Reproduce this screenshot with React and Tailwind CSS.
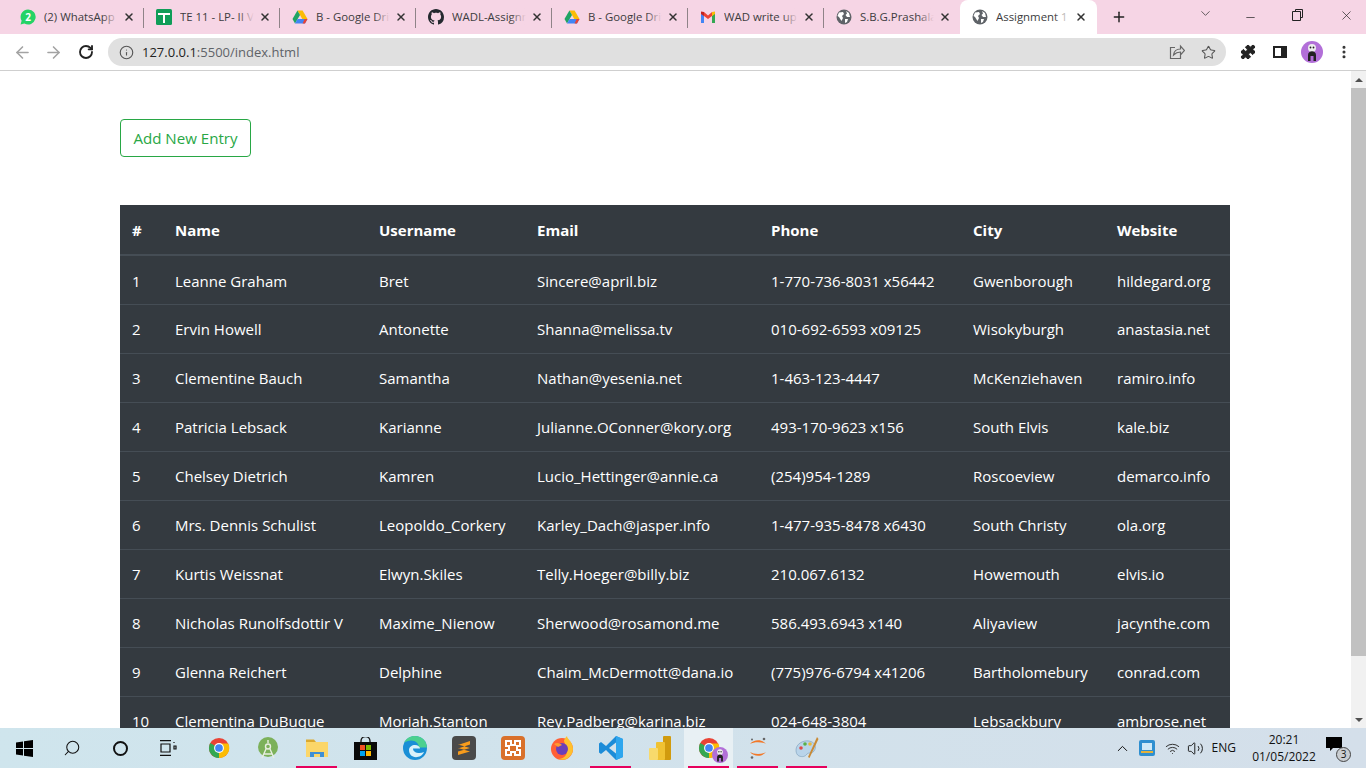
import React from "react";
import { Plus, X, Minus, ChevronDown, ArrowLeft, ArrowRight, RotateCw, Info, Star, Puzzle, MoreVertical, Search, ChevronUp, Wifi, Volume2 } from "lucide-react";

const users = [
  ["1", "Leanne Graham", "Bret", "Sincere@april.biz", "1-770-736-8031 x56442", "Gwenborough", "hildegard.org"],
  ["2", "Ervin Howell", "Antonette", "Shanna@melissa.tv", "010-692-6593 x09125", "Wisokyburgh", "anastasia.net"],
  ["3", "Clementine Bauch", "Samantha", "Nathan@yesenia.net", "1-463-123-4447", "McKenziehaven", "ramiro.info"],
  ["4", "Patricia Lebsack", "Karianne", "Julianne.OConner@kory.org", "493-170-9623 x156", "South Elvis", "kale.biz"],
  ["5", "Chelsey Dietrich", "Kamren", "Lucio_Hettinger@annie.ca", "(254)954-1289", "Roscoeview", "demarco.info"],
  ["6", "Mrs. Dennis Schulist", "Leopoldo_Corkery", "Karley_Dach@jasper.info", "1-477-935-8478 x6430", "South Christy", "ola.org"],
  ["7", "Kurtis Weissnat", "Elwyn.Skiles", "Telly.Hoeger@billy.biz", "210.067.6132", "Howemouth", "elvis.io"],
  ["8", "Nicholas Runolfsdottir V", "Maxime_Nienow", "Sherwood@rosamond.me", "586.493.6943 x140", "Aliyaview", "jacynthe.com"],
  ["9", "Glenna Reichert", "Delphine", "Chaim_McDermott@dana.io", "(775)976-6794 x41206", "Bartholomebury", "conrad.com"],
  ["10", "Clementina DuBuque", "Moriah.Stanton", "Rey.Padberg@karina.biz", "024-648-3804", "Lebsackbury", "ambrose.net"],
];

const ChromeIcon = ({ size = 22 }) => (
  <svg width={size} height={size} viewBox="0 0 24 24">
    <circle cx="12" cy="12" r="11" fill="#ea4335" />
    <path d="M12 12 L2.5 6.5 A11 11 0 0 0 12 23 Z" fill="#34a853" />
    <path d="M12 7 H22 A11 11 0 0 1 12 23 Z" fill="#fbbc05" />
    <circle cx="12" cy="12" r="5.4" fill="#fff" />
    <circle cx="12" cy="12" r="4.2" fill="#4285f4" />
  </svg>
);

const Globe = () => (
  <svg width="16" height="16" viewBox="0 0 16 16">
    <circle cx="8" cy="8" r="7.5" fill="#5f6368" />
    <path d="M3 3.5 L7 3 L8 5 L6 7 L7 9 L5.5 12 L3 8 L1.5 7Z M10 2 L13 4 L14 8 L11 8 L9.5 6 L11 4.5Z M9 10 L12 10 L11 13 L9 14Z" fill="#fff" />
  </svg>
);

const Drive = () => (
  <svg width="16" height="16" viewBox="0 0 16 16">
    <path d="M5.4 1.5 H10.6 L15.5 10 H10.3Z" fill="#fbbc05" />
    <path d="M5.4 1.5 L0.5 10 L3 14.5 L8 6Z" fill="#1fa463" />
    <path d="M3 14.5 H13 L15.5 10 H5.6Z" fill="#4285f4" />
    <path d="M10.6 14.5 H13 L15.5 10 H12.6Z" fill="#ea4335" />
  </svg>
);

const tabs = [
  {
    title: "(2) WhatsApp",
    icon: (
      <svg width="16" height="16" viewBox="0 0 16 16">
        <path d="M8 .5a7.5 7.5 0 0 0-6.4 11.3L.6 15.5l3.8-1A7.5 7.5 0 1 0 8 .5Z" fill="#25d366" />
        <text x="8" y="11.5" textAnchor="middle" fontSize="10" fontWeight="700" fill="#fff" fontFamily="Open Sans, sans-serif">2</text>
      </svg>
    ),
  },
  {
    title: "TE 11 - LP- II V",
    icon: (
      <svg width="16" height="16" viewBox="0 0 16 16">
        <rect width="16" height="16" rx="1.5" fill="#0f9d58" />
        <path d="M2 4h12v2H9v8H7V6H2z" fill="#fff" />
      </svg>
    ),
  },
  { title: "B - Google Drive", icon: <Drive /> },
  {
    title: "WADL-Assignment",
    icon: (
      <svg width="16" height="16" viewBox="0 0 16 16" fill="#24292f">
        <path d="M8 0C3.58 0 0 3.58 0 8c0 3.54 2.29 6.53 5.47 7.59.4.07.55-.17.55-.38 0-.19-.01-.82-.01-1.49-2.01.37-2.53-.49-2.69-.94-.09-.23-.48-.94-.82-1.13-.28-.15-.68-.52-.01-.53.63-.01 1.08.58 1.23.82.72 1.21 1.87.87 2.33.66.07-.52.28-.87.51-1.07-1.78-.2-3.64-.89-3.64-3.95 0-.87.31-1.59.82-2.15-.08-.2-.36-1.02.08-2.12 0 0 .67-.21 2.2.82.64-.18 1.32-.27 2-.27s1.36.09 2 .27c1.53-1.04 2.2-.82 2.2-.82.44 1.1.16 1.92.08 2.12.51.56.82 1.27.82 2.15 0 3.07-1.87 3.75-3.65 3.95.29.25.54.73.54 1.48 0 1.07-.01 1.93-.01 2.2 0 .21.15.46.55.38A8.01 8.01 0 0 0 16 8c0-4.42-3.58-8-8-8Z" />
      </svg>
    ),
  },
  { title: "B - Google Drive", icon: <Drive /> },
  {
    title: "WAD write up",
    icon: (
      <svg width="16" height="16" viewBox="0 0 16 16">
        <path d="M1 3.5V14h3V7Z" fill="#4285f4" />
        <path d="M15 3.5V14h-3V7Z" fill="#34a853" />
        <path d="M12 3 L8 6.5 L4 3 L1 3.5 L4 7 L8 10 L12 7 L15 3.5Z" fill="#ea4335" />
        <path d="M12 3 L15 2.5 V5 L12 7Z" fill="#fbbc05" />
        <path d="M1 2.5 L4 3 V7 L1 5Z" fill="#c5221f" />
      </svg>
    ),
  },
  { title: "S.B.G.Prashala", icon: <Globe /> },
];

function Tab({ title, icon, last }) {
  return (
    <div className="w-[136px] h-[34px] flex items-center pl-3 relative shrink-0">
      {icon}
      <span className="relative ml-2 w-[74px] overflow-hidden whitespace-nowrap text-[11.4px] text-[#3c3c40]">
        {title}
        <span className="absolute right-0 top-0 bottom-0 w-4 bg-linear-to-r from-transparent to-[#f6d5e5]" />
      </span>
      <X size={12} strokeWidth={3} className="ml-[5px] text-[#333]" />
      {!last && <span className="absolute right-0 top-2 w-px h-5 bg-[#8f8388]" />}
    </div>
  );
}

function Browser() {
  return (
    <>
      {/* tab strip */}
      <div className="h-[34px] bg-[#f6d5e5] flex items-center pl-2 shrink-0">
        {tabs.map((t, i) => (
          <Tab key={i} title={t.title} icon={t.icon} last={i === tabs.length - 1} />
        ))}
        <div className="w-[137px] h-[34px] bg-white rounded-t-lg flex items-center pl-3 shrink-0">
          <Globe />
          <span className="relative ml-2 w-[74px] overflow-hidden whitespace-nowrap text-[11.4px] text-[#3c3c40]">
            Assignment 1
            <span className="absolute right-0 top-0 bottom-0 w-4 bg-linear-to-r from-transparent to-white" />
          </span>
          <X size={12} strokeWidth={3} className="ml-[5px] text-[#333]" />
        </div>
        <Plus size={16} strokeWidth={2.2} className="ml-[14px] text-[#222]" />
        <ChevronDown size={15} strokeWidth={1.2} className="ml-[71px] text-[#333] -mt-2" />
        <Minus size={13} strokeWidth={1.3} className="ml-[31px] text-[#222]" />
        <svg width="12" height="12" viewBox="0 0 12 12" fill="none" stroke="#222" className="ml-[35px] -mt-1">
          <path d="M3.5 2.5V.5h7v8h-2M.5 2.5h8v9h-8z" />
        </svg>
        <X size={15} strokeWidth={1.1} className="ml-[35px] text-[#222] -mt-1" />
      </div>

      {/* toolbar */}
      <div className="h-[37px] bg-white border-b border-[#cfcfcf] flex items-center pl-[13px] shrink-0">
        <ArrowLeft size={19} strokeWidth={2} className="text-[#a3a3a3]" />
        <ArrowRight size={19} strokeWidth={2} className="ml-3 text-[#a3a3a3]" />
        <RotateCw size={16} strokeWidth={2.8} className="ml-[15px] text-[#222]" />
        <div className="ml-[14px] w-[1118px] h-[28px] rounded-full bg-[#e0e0e0] flex items-center pl-[11px] pr-[10px] shrink-0">
          <Info size={15} strokeWidth={1.8} className="text-[#555]" />
          <span className="ml-[8px] pt-[2px] text-[13px] text-[#222]">
            127.0.0.1<span className="text-[#5f6368]">:5500/index.html</span>
          </span>
          <svg width="16" height="16" viewBox="0 0 16 16" fill="none" stroke="#666" strokeWidth="1.2" className="ml-auto">
            <path d="M6 3.500H1.500v11h10V10M4.500 11c.5-4 3-6 7-6V2l4 4.500-4 4.500V8c-3 0-5 1-7 3Z" />
          </svg>
          <Star size={15} strokeWidth={1.7} className="ml-[16px] text-[#555]" />
        </div>
        <Puzzle size={16} fill="#222" strokeWidth={1.5} className="ml-[14px] text-[#222]" />
        <svg width="14" height="14" viewBox="0 0 14 14" className="ml-[17px]">
          <path d="M0 1h14v12H0Z M2 3v8h6V3Z" fill="#222" fillRule="evenodd" />
        </svg>
        <Avatar size={22} className="ml-[14px]" />
        <MoreVertical size={16} strokeWidth={2.6} className="ml-[13px] text-[#333]" />
      </div>
    </>
  );
}

function Avatar({ size, className = "" }) {
  return (
    <svg width={size} height={size} viewBox="0 0 22 22" className={className}>
      <circle cx="11" cy="11" r="11" fill="#b26fd8" />
      <circle cx="11" cy="7" r="4" fill="#eee" />
      <circle cx="9.5" cy="6.5" r=".9" fill="#222" />
      <circle cx="12.5" cy="6.5" r=".9" fill="#222" />
      <path d="M7 20v-6c0-5 8-5 8 0v6h-2.5v-5h-3v5Z" fill="#222" />
    </svg>
  );
}

function Scrollbar() {
  return (
    <div className="w-[15px] bg-[#f1f1f1] flex flex-col items-center shrink-0">
      <div className="h-[17px] flex items-center justify-center">
        <div className="w-0 h-0 border-x-[4px] border-x-transparent border-b-[4px] border-b-[#505050]" />
      </div>
      <div className="w-full h-[568px] bg-[#c1c1c1]" />
      <div className="flex-1" />
      <div className="h-[17px] flex items-center justify-center">
        <div className="w-0 h-0 border-x-[4px] border-x-transparent border-t-[4px] border-t-[#505050]" />
      </div>
    </div>
  );
}

const widths = ["w-[43px]", "w-[204px]", "w-[158px]", "w-[234px]", "w-[202px]", "w-[144px]", "w-[125px]"];
const heads = ["#", "Name", "Username", "Email", "Phone", "City", "Website"];

function Page() {
  return (
    <div className="flex-1 flex min-h-0">
      <div className="flex-1 overflow-hidden bg-white pt-[48px] pl-[120px]">
        <button className="h-[38px] w-[131px] border border-[#28a745] rounded text-[#28a745] text-[15.1px]">
          Add New Entry
        </button>
        <table className="mt-[48px] w-[1110px] table-fixed border-collapse bg-[#343a40] text-white text-[15px]">
          <thead>
            <tr className="h-[50px] border-b-2 border-[#454d55]">
              {heads.map((h, i) => (
                <th key={h} className={`${widths[i]} px-3 pt-[2px] text-left font-bold`}>{h}</th>
              ))}
            </tr>
          </thead>
          <tbody>
            {users.map((u) => (
              <tr key={u[0]} className="h-[49px] border-b border-[#454d55]">
                {u.map((c, i) => (
                  <td key={i} className="px-3 pt-[2px] whitespace-nowrap">{c}</td>
                ))}
              </tr>
            ))}
          </tbody>
        </table>
      </div>
      <Scrollbar />
    </div>
  );
}

const Slot = ({ children, line, active, w = "w-[49px]" }) => (
  <div className={`${w} h-[40px] flex items-center justify-center relative shrink-0 ${active ? "bg-[#e8f0f4]" : ""}`}>
    {children}
    {line && <span className="absolute bottom-0 left-1 right-1 h-[2px] bg-[#e6005c]" />}
  </div>
);

function Taskbar() {
  return (
    <div className="h-[40px] bg-linear-to-r from-[#cfe5ed] to-[#d4dfea] flex items-center shrink-0 text-[#111]">
      <Slot w="w-[48px]">
        <svg width="17" height="17" viewBox="0 0 17 17" fill="#000">
          <path d="M0 2.5 7 1.5V8H0ZM8 1.3 17 0V8H8ZM0 9h7v6.5L0 14.5ZM8 9h9v8L8 15.7Z" />
        </svg>
      </Slot>
      <Slot w="w-[48px]">
        <Search size={18} strokeWidth={1.4} className="-scale-x-100" />
      </Slot>
      <Slot w="w-[48px]">
        <div className="w-[15px] h-[15px] rounded-full border-[2.5px] border-[#111]" />
      </Slot>
      <Slot w="w-[48px]">
        <svg width="17" height="16" viewBox="0 0 17 16" fill="none" stroke="#111" strokeWidth="1.2">
          <path d="M0 .6h11M0 15.4h11M1 4h9v8H1zM14 2v1M14 6h2v3h-2z" />
        </svg>
      </Slot>
      <div className="w-[2px] shrink-0" />
      <Slot><ChromeIcon /></Slot>
      <Slot>
        <svg width="22" height="22" viewBox="0 0 22 22">
          <circle cx="11" cy="10" r="10" fill="#7cb15a" />
          <path d="M11 3v3M11 7a2.5 2.5 0 0 1 0 5 2.5 2.5 0 0 1 0-5M9 12l-4 9M13 12l4 9M6.500 17h9" stroke="#e8eee0" strokeWidth="1.400" fill="none" />
        </svg>
      </Slot>
      <Slot line>
        <svg width="22" height="20" viewBox="0 0 22 20">
          <path d="M0 1.500h8l2 2.500H0Z" fill="#dba92f" />
          <path d="M0 4h22v15H0Z" fill="#fbd669" />
          <path d="M4 14h14v5H4Z" fill="#3f8fd6" />
          <path d="M8 16h6v3H8Z" fill="#fbd669" />
        </svg>
      </Slot>
      <Slot>
        <svg width="23" height="23" viewBox="0 0 23 23">
          <path d="M7 7V4a4.500 4.500 0 0 1 9 0v3" stroke="#111" strokeWidth="1.300" fill="none" />
          <rect y="5" width="23" height="18" fill="#0a0a0a" />
          <rect x="6" y="8" width="5" height="5" fill="#f25022" />
          <rect x="12" y="8" width="5" height="5" fill="#7fba00" />
          <rect x="6" y="14" width="5" height="5" fill="#00a4ef" />
          <rect x="12" y="14" width="5" height="5" fill="#ffb900" />
        </svg>
      </Slot>
      <Slot>
        <svg width="24" height="24" viewBox="0 0 24 24">
          <circle cx="12" cy="12" r="12" fill="#1a8fd6" />
          <path d="M24 12c0-7-5-12-12-12C7 0 3 2.500 1 7c3-3 11-4 14 1 1 2 .5 3-1 3.500h10Z" fill="#4cd08f" />
          <path d="M6 14c0-3 3-5 6-5s5 2 5 3.500H10c0 4 6 6 11 3.500-2 5-8 6-11 4.500-3-1-4-4-4-6.500Z" fill="#d8f1fa" />
        </svg>
      </Slot>
      <Slot>
        <div className="w-[24px] h-[24px] rounded-sm bg-[#4a4a4a] flex items-center justify-center">
          <svg width="14" height="16" viewBox="0 0 14 16" fill="#f89c1c">
            <path d="M1 5 13 1v3.500L1 8.500ZM1 8l12 3.500v-3.500L1 4.500ZM1 11.500 13 8v3.500L1 15Z" />
          </svg>
        </div>
      </Slot>
      <Slot>
        <div className="w-[24px] h-[24px] rounded-sm bg-[#d9702a] flex items-center justify-center">
          <svg width="18" height="18" viewBox="0 0 18 18" fill="none" stroke="#fff" strokeWidth="2">
            <path d="M2 2h5v4h4V2h5v5h-3v4h3v5h-5v-3H7v3H2v-5h3V7H2Z" />
          </svg>
        </div>
      </Slot>
      <Slot>
        <svg width="24" height="24" viewBox="0 0 24 24">
          <circle cx="12" cy="13" r="11" fill="#ff5f35" />
          <path d="M23 13a11 11 0 0 1-15 10c6 0 9-4 9-8 0-3-2-6-3-10 0-1 1-3 3-5 0 3 6 6 6 13Z" fill="#ffc02d" />
          <circle cx="12" cy="13" r="6" fill="#6b3fb8" />
          <path d="M4 8c3-2 6-1 8 1l-4 2Z" fill="#ff9a2e" />
        </svg>
      </Slot>
      <Slot line>
        <svg width="24" height="24" viewBox="0 0 24 24">
          <path d="M17 0 24 3v18l-7 3L7 14l-5 4-2-1.500v-9L2 6l5 4Z" fill="#1c8cd8" />
          <path d="M17 0 24 3v18l-7 3Z" fill="#2ea6ee" />
          <path d="M17 6.500 10 12l7 5.500Z" fill="#d4e3ec" />
        </svg>
      </Slot>
      <Slot>
        <svg width="22" height="24" viewBox="0 0 22 24">
          <rect x="14" width="8" height="24" rx="1" fill="#d19b0e" />
          <rect x="7" y="6" width="9" height="18" rx="1" fill="#f0c232" />
          <rect y="12" width="9" height="12" rx="1" fill="#f8da6c" />
        </svg>
      </Slot>
      <Slot active line>
        <div className="relative">
          <ChromeIcon />
          <Avatar size={16} className="absolute -right-2 -bottom-1" />
        </div>
      </Slot>
      <Slot line>
        <svg width="22" height="24" viewBox="0 0 22 24">
          <path d="M3 8c4-5 12-5 16 0-4-2.500-12-2.500-16 0ZM3 16c4 5 12 5 16 0-4 2.500-12 2.500-16 0Z" fill="#f37726" />
          <circle cx="17" cy="3" r="1.300" fill="#666" />
          <circle cx="5" cy="3.500" r="1" fill="#666" />
          <circle cx="5" cy="21.500" r="1.300" fill="#666" />
        </svg>
      </Slot>
      <Slot line>
        <svg width="24" height="24" viewBox="0 0 24 24">
          <path d="M1 14C1 8 8 4 14 5c6 1 8 6 5 10-2 3-5 1-7 3-2 3-5 3-8 2-2-1-3-3-3-6Z" fill="#b9d4ea" stroke="#7a9cb8" strokeWidth=".6" />
          <circle cx="6" cy="12" r="1.800" fill="#e04a4a" />
          <circle cx="10" cy="8" r="1.800" fill="#5ab04a" />
          <circle cx="15" cy="8" r="1.800" fill="#e8b93a" />
          <path d="M22 1 13 21l1.500 1L23.500 3Z" fill="#c98a35" />
        </svg>
      </Slot>

      {/* tray */}
      <ChevronUp size={17} strokeWidth={1.4} className="ml-auto" />
      <svg width="16" height="16" viewBox="0 0 16 16" className="ml-[8px]">
        <rect width="16" height="16" rx="2" fill="#2f8fd0" />
        <rect x="3" y="3" width="10" height="7" fill="#cfe9f7" />
        <rect x="2" y="11" width="12" height="2" fill="#e3b23c" />
      </svg>
      <Wifi size={15} strokeWidth={1.6} className="ml-[10px] text-[#333]" />
      <Volume2 size={17} strokeWidth={1.3} className="ml-[7px]" />
      <span className="ml-[8px] text-[12px]">ENG</span>
      <div className="ml-[12px] w-[72px] flex flex-col items-center text-[12px] leading-[17px]">
        <span>20:21</span>
        <span>01/05/2022</span>
      </div>
      <div className="relative ml-[6px] mr-[24px] w-[16px] h-[14px]">
        <svg width="16" height="15" viewBox="0 0 16 15" fill="#000" className="-mt-1">
          <path d="M0 0h16v11h-9l-3 3v-3H0Z" />
        </svg>
        <span className="absolute -right-[9px] -bottom-[7px] w-[15px] h-[15px] rounded-full bg-[#c9cdd1] border border-[#444] text-[10px] leading-[13px] text-center">3</span>
      </div>
    </div>
  );
}

export default function App() {
  return (
    <div className="h-screen w-[1366px] overflow-hidden flex flex-col font-['Open_Sans','Noto_Sans',sans-serif]">
      <Browser />
      <Page />
      <Taskbar />
    </div>
  );
}
